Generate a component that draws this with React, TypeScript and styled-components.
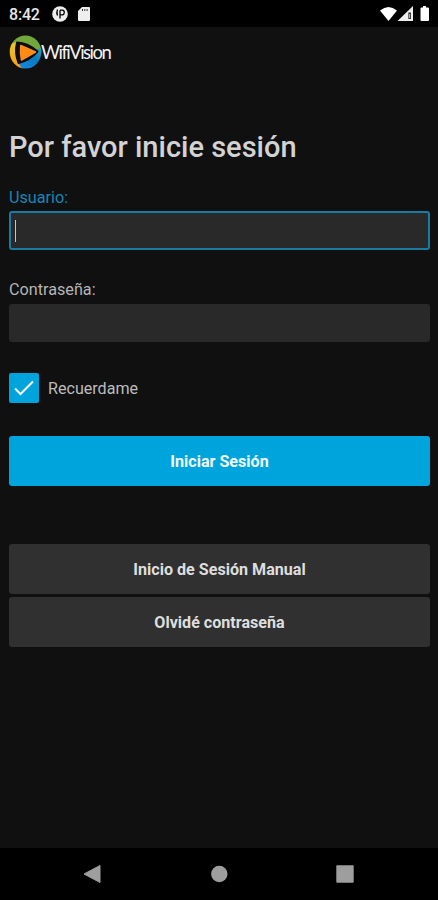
import React, { useState } from "react";
import styled, { createGlobalStyle } from "styled-components";

const GlobalStyle = createGlobalStyle`
  *, *::before, *::after { box-sizing: border-box; }
  body { margin: 0; background: #101010; font-family: Roboto, "Liberation Sans", sans-serif; }
`;

const Screen = styled.div`
  display: flex;
  flex-direction: column;
  width: 100%;
  height: 900px;
  overflow: hidden;
  background: #101010;
  color: #cfcfcf;
`;

const StatusBar = styled.div`
  display: flex;
  align-items: center;
  justify-content: space-between;
  flex: none;
  height: 27px;
  padding: 1px 8px 0 9px;
  background: #000;
  color: #e8e8e8;
`;

const StatusGroup = styled.div`
  display: flex;
  align-items: center;
  gap: 10px;
`;

const Clock = styled.span`
  width: 33px;
  padding-top: 1px;
  font-size: 16px;
  font-weight: 500;
  line-height: 20px;
  letter-spacing: -0.2px;
`;

const Header = styled.header`
  display: flex;
  align-items: center;
  flex: none;
  height: 49px;
  padding-left: 9px;
`;

const Wordmark = styled.span`
  margin-left: -1px;
  color: #f2f2f2;
  font-family: Lato, "Liberation Sans", sans-serif;
  font-size: 18.5px;
  line-height: 24px;
  letter-spacing: -1.55px;
  white-space: nowrap;
`;

const Form = styled.form`
  display: flex;
  flex-direction: column;
  flex: 1;
  padding: 53px 8px 0 9px;
`;

const Title = styled.h1`
  margin: 0;
  height: 36px;
  font-size: 29px;
  font-weight: 500;
  line-height: 36px;
  white-space: nowrap;
  color: #d3d3d3;
`;

const Field = styled.label<{ $top: number }>`
  display: flex;
  flex-direction: column;
  margin-top: ${(p) => p.$top}px;
`;

const FieldLabel = styled.span<{ $active?: boolean }>`
  height: ${(p) => (p.$active ? 24 : 25)}px;
  font-size: 16.2px;
  line-height: 22px;
  color: ${(p) => (p.$active ? "#1387b5" : "#b5b5b5")};
`;

const InputBox = styled.span<{ $active?: boolean }>`
  display: flex;
  align-items: center;
  height: ${(p) => (p.$active ? 39 : 38)}px;
  padding: 0 4px;
  border: 2px solid ${(p) => (p.$active ? "#187ca2" : "#292929")};
  border-radius: 3px;
  background: #292929;
`;

const Caret = styled.i`
  width: 1px;
  height: 22px;
  background: #c4c4c4;
`;

const Input = styled.input`
  flex: 1;
  min-width: 0;
  padding: 0;
  border: 0;
  outline: 0;
  background: transparent;
  color: #ddd;
  font: 16px Roboto, sans-serif;
`;

const Remember = styled.div`
  display: flex;
  align-items: center;
  gap: 9px;
  height: 30px;
  margin-top: 31px;
  font-size: 16.1px;
  color: #bcbcbc;
`;

const CheckBox = styled.button`
  display: flex;
  align-items: center;
  justify-content: center;
  width: 30px;
  height: 30px;
  padding: 0;
  border: 0;
  border-radius: 2px;
  background: #00a4dc;
`;

const Button = styled.button<{ $primary?: boolean; $top: number }>`
  height: 50px;
  margin: ${(p) => p.$top}px 0 0;
  padding: 2px 0 0;
  border: 0;
  border-radius: 3px;
  background: ${(p) => (p.$primary ? "#00a4dc" : "#303030")};
  color: ${(p) => (p.$primary ? "#f2fbff" : "#dedede")};
  font: 700 16.1px/20px Roboto, sans-serif;
`;

const NavBar = styled.nav`
  display: flex;
  align-items: center;
  justify-content: center;
  gap: 108px;
  flex: none;
  height: 52px;
  background: #000;
`;

const Logo = () => (
  <svg width="33" height="34" viewBox="0 0 33 34">
    <defs>
      <linearGradient id="amber" x1="0" y1="0" x2="0" y2="1">
        <stop offset="0" stopColor="#e9c928" />
        <stop offset="1" stopColor="#f49a1b" />
      </linearGradient>
      <linearGradient id="blue" x1="1" y1="0" x2="0" y2="1">
        <stop offset="0" stopColor="#35a6a8" />
        <stop offset=".4" stopColor="#0879c4" />
        <stop offset="1" stopColor="#1b8be0" />
      </linearGradient>
      <clipPath id="disc">
        <ellipse cx="16.5" cy="17" rx="15.8" ry="16.6" />
      </clipPath>
    </defs>
    <g clipPath="url(#disc)">
      <path d="M0 0H33V20L17 17L4 8H0Z" fill="#72a83b" />
      <path d="M0 9L8 7L16 17L14 34H0Z" fill="url(#amber)" />
      <path d="M33 13L17 17L9 27L13 34H33Z" fill="url(#blue)" />
    </g>
    <path d="M8 7.5Q19 8 28.5 16.5Q21 25 9.5 28Q5.5 18 8 7.5Z" fill="#0c0c0c" stroke="#0c0c0c" strokeWidth="2" strokeLinejoin="round" />
    <path d="M11.8 10.5L26.5 17L12.5 25Q11 18 11.8 10.5Z" fill="#ff8c16" stroke="#ff8c16" strokeWidth="1.6" strokeLinejoin="round" />
  </svg>
);

export default function App() {
  const [checked, setChecked] = useState(true);
  return (
    <>
      <GlobalStyle />
      <Screen>
        <StatusBar>
          <StatusGroup>
            <Clock>8:42</Clock>
            <svg width="16" height="16" viewBox="0 0 16 16">
              <circle cx="8" cy="8" r="7.8" fill="#eee" />
              <path d="M5.5 3.5Q4.2 6.5 5.5 9.5M8 4.2V12.5M8 4.2H10.3Q12.3 4.4 12.3 6.4T10.3 8.8H8" fill="none" stroke="#000" strokeWidth="1.3" />
            </svg>
            <svg width="12" height="14" viewBox="0 0 12 14">
              <path d="M4 0H11Q12 0 12 1V13Q12 14 11 14H1Q0 14 0 13V4Z" fill="#eee" />
              <path d="M4.5 2V4M6.8 2V4M9.1 2V4" stroke="#333" />
            </svg>
          </StatusGroup>
          <StatusGroup>
            <svg width="50" height="16" viewBox="0 0 50 16">
              <path d="M0 4.4Q8.5-2.6 17 4.4L8.5 15Z" fill="#fff" />
              <path d="M17.5 15L33 0V15Z" fill="#eee" />
              <path d="M28.3 6.5H31V13H28.3Z" fill="#333" />
              <path d="M29.6 8V12" stroke="#bbb" />
              <path d="M43 0H46V1.5H48Q49 1.5 49 2.5V14Q49 15 48 15H41.5Q40.5 15 40.5 14V2.5Q40.5 1.5 41.5 1.5H43Z" fill="#fff" />
            </svg>
          </StatusGroup>
        </StatusBar>
        <Header>
          <Logo />
          <Wordmark>WifiVision</Wordmark>
        </Header>
        <Form onSubmit={(e) => e.preventDefault()}>
          <Title>Por favor inicie sesión</Title>
          <Field $top={22}>
            <FieldLabel $active>Usuario:</FieldLabel>
            <InputBox $active>
              <Caret />
              <Input type="text" />
            </InputBox>
          </Field>
          <Field $top={29}>
            <FieldLabel>Contraseña:</FieldLabel>
            <InputBox>
              <Input type="password" />
            </InputBox>
          </Field>
          <Remember>
            <CheckBox type="button" role="checkbox" aria-checked={checked} onClick={() => setChecked(!checked)}>
              {checked && (
                <svg width="20" height="16" viewBox="0 0 20 16">
                  <path d="M1 8.5L6.5 14L19 1.5" fill="none" stroke="#fff" strokeWidth="2" />
                </svg>
              )}
            </CheckBox>
            Recuerdame
          </Remember>
          <Button $primary $top={33} type="submit">Iniciar Sesión</Button>
          <Button $top={58} type="button">Inicio de Sesión Manual</Button>
          <Button $top={3} type="button">Olvidé contraseña</Button>
        </Form>
        <NavBar>
          <svg width="18" height="18" viewBox="0 0 18 18">
            <path d="M0 9L16 .5V17.5Z" fill="#9e9e9e" stroke="#9e9e9e" strokeLinejoin="round" />
          </svg>
          <svg width="18" height="18" viewBox="0 0 18 18">
            <circle cx="9.3" cy="9" r="8.2" fill="#9e9e9e" />
          </svg>
          <svg width="18" height="18" viewBox="0 0 18 18">
            <rect x=".3" y=".3" width="17.4" height="17.4" rx="1" fill="#9e9e9e" />
          </svg>
        </NavBar>
      </Screen>
    </>
  );
}
